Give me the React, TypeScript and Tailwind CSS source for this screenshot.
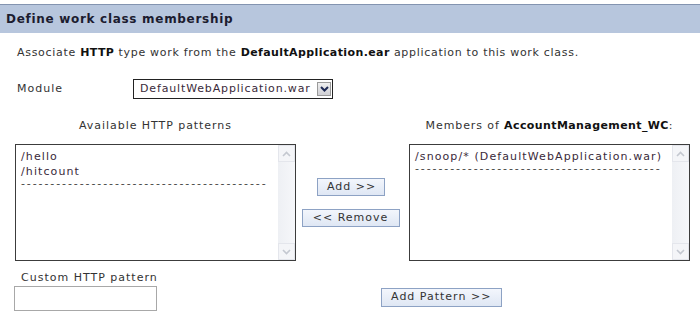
import React from "react";

const font = { fontFamily: '"DejaVu Sans", Verdana, sans-serif' };

const DASHES = "------------------------------------------";

function Chevron({ up }: { up?: boolean }) {
  return (
    <svg width="9" height="6" viewBox="0 0 9 6" className="block">
      <path
        d={up ? "M1 5 L4.5 1.5 L8 5" : "M1 1 L4.5 4.5 L8 1"}
        fill="none"
        stroke="#c4c8d0"
        strokeWidth="1.6"
      />
    </svg>
  );
}

// faded scrollbar, like a disabled listbox
function ScrollBar() {
  return (
    <div className="flex w-[17px] flex-col bg-gradient-to-r from-[#eef0f4] to-[#f6f7fa]">
      <div className="flex h-[17px] items-center justify-center border border-[#e4e6ec] bg-[#f4f5f8]">
        <Chevron up />
      </div>
      <div className="flex-1" />
      <div className="flex h-[17px] items-center justify-center border border-[#e4e6ec] bg-[#f4f5f8]">
        <Chevron />
      </div>
    </div>
  );
}

function ListBox({ items }: { items: string[] }) {
  return (
    <div className="flex h-[117px] w-[281px] border border-[#3c3c3c] bg-white">
      <div className="flex-1 overflow-hidden px-[5px] pt-[4px] text-[11px] leading-[15px] text-[#3a2a3a]">
        {items.map((it) => (
          <div key={it} className="whitespace-nowrap tracking-[1.1px]">
            {it}
          </div>
        ))}
        <div className="mt-[-3px] whitespace-nowrap tracking-[1.9px] text-[#444]">{DASHES}</div>
      </div>
      <ScrollBar />
    </div>
  );
}

function Btn({ children, className }: { children: React.ReactNode; className?: string }) {
  return (
    <div
      className={
        "flex h-[18px] items-center justify-center border border-[#8da2c4] bg-gradient-to-b from-[#f3f6fc] to-[#dfe7f4] text-[11px] tracking-[1px] text-[#333] " +
        (className ?? "")
      }
    >
      {children}
    </div>
  );
}

export default function App() {
  return (
    <div className="h-[328px] w-[700px] overflow-hidden bg-white text-[#333]" style={font}>
      {/* title bar */}
      <div className="mt-[4px] flex h-[29px] items-center border-t border-[#8394b0] bg-[#b7c6dd] px-[6px] text-[12px] font-bold tracking-[0.7px] text-[#1c1c30]">
        Define work class membership
      </div>

      <div className="mt-[13px] pl-[17px] text-[11px] leading-[14px] tracking-[0.7px]">
        Associate <b className="tracking-[0.4px] text-[#111]">HTTP</b> type work from the{" "}
        <b className="tracking-[0.4px] text-[#111]">DefaultApplication.ear</b> application to this work class.
      </div>

      {/* module select */}
      <div className="mt-[19px] flex items-center pl-[17px] text-[11px] tracking-[1px]">
        <span className="w-[116px]">Module</span>
        <div className="flex h-[20px] w-[200px] items-center justify-between border border-[#222] bg-white pl-[6px] pr-[1px]">
          <span className="whitespace-nowrap tracking-[0.85px] text-[#3a2a3a]">DefaultWebApplication.war</span>
          <div className="flex h-[14px] w-[14px] shrink-0 items-center justify-center border border-[#9a9a9a] bg-gradient-to-b from-[#f0f0f0] to-[#cfcfd4]">
            <svg width="9" height="6" viewBox="0 0 9 6">
              <path d="M1 1 L4.5 4.5 L8 1" fill="none" stroke="#1e2a55" strokeWidth="2" />
            </svg>
          </div>
        </div>
      </div>

      {/* two lists with move buttons */}
      <div className="mt-[20px] flex pl-[15px] text-[11px]">
        <div className="flex flex-col items-center">
          <div className="h-[14px] whitespace-nowrap leading-[14px] tracking-[0.95px]">Available HTTP patterns</div>
          <div className="mt-[11px]">
            <ListBox items={["/hello", "/hitcount"]} />
          </div>
        </div>

        <div className="flex w-[113px] flex-col items-center pr-[4px] pt-[59px]">
          <Btn className="w-[68px] pl-[2px]">Add &gt;&gt;</Btn>
          <Btn className="mt-[13px] w-[98px]">&lt;&lt; Remove</Btn>
        </div>

        <div className="flex flex-col items-center">
          <div className="h-[14px] whitespace-nowrap leading-[14px] tracking-[0.9px]">
            Members of <b className="tracking-[0.4px] text-[#111]">AccountManagement_WC</b>:
          </div>
          <div className="mt-[11px]">
            <ListBox items={["/snoop/* (DefaultWebApplication.war)"]} />
          </div>
        </div>
      </div>

      {/* custom pattern */}
      <div className="mt-[10px] flex items-end pl-[14px] text-[11px]">
        <div className="flex flex-col">
          <span className="whitespace-nowrap pl-[7px] leading-[14px] tracking-[1px]">Custom HTTP pattern</span>
          <div className="mt-[1px] h-[25px] w-[143px] border border-[#a8a8a8] bg-white" />
        </div>
        <Btn className="mb-[4px] ml-[223px] h-[19px] w-[121px]">Add Pattern &gt;&gt;</Btn>
      </div>
    </div>
  );
}
